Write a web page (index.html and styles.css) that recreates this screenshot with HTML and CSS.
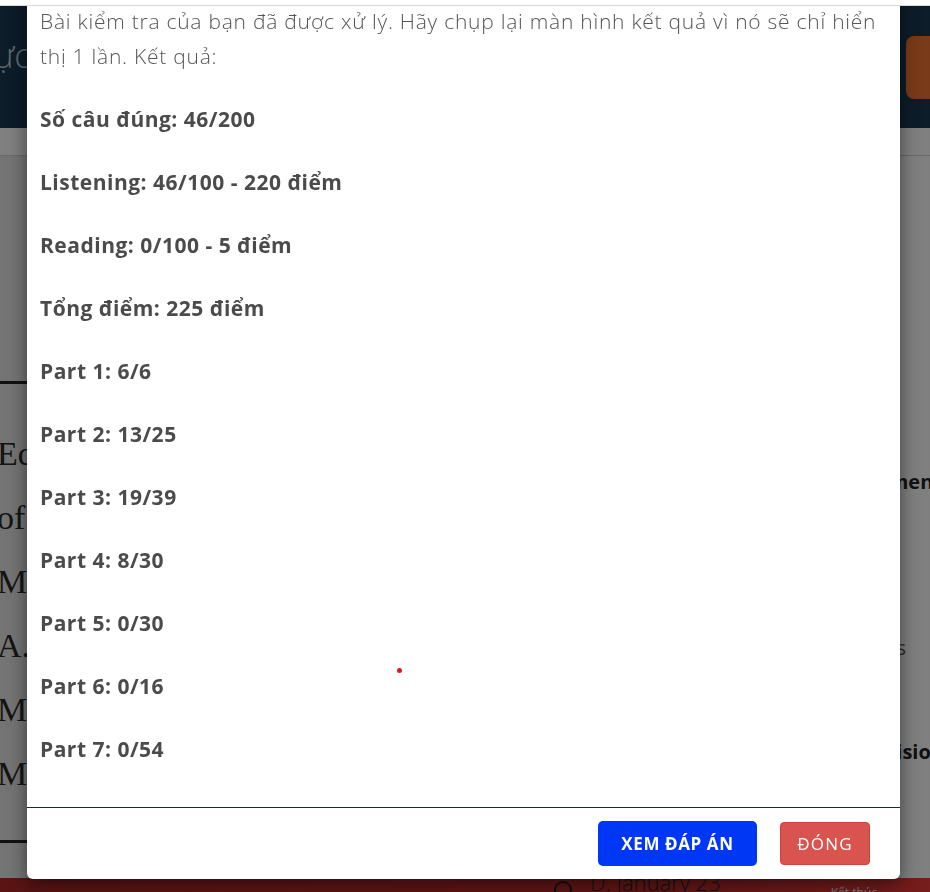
FILE: index.html
```html
<!DOCTYPE html>
<html lang="vi">
<head>
<meta charset="utf-8">
<title>Kết quả bài kiểm tra</title>
<link rel="stylesheet" href="styles.css">
</head>
<body>
<div class="page">
  <header class="site-header">
    <div class="brand">thực hành</div>
    <button class="cta">Nộp bài</button>
  </header>
  <nav class="subbar"></nav>
  <main class="main">
    <section class="doc">
      <div class="doc-rule"></div>
      <div class="doc-text">
        <p>Eq</p>
        <p>of</p>
        <p>M.-</p>
        <p>A.M</p>
        <p>M.-</p>
        <p>M.</p>
      </div>
      <div class="doc-rule"></div>
    </section>
    <section class="questions">
      <p class="q q-bold q1">Employee Agreement</p>
      <p class="q q-light q2">Answers</p>
      <p class="q q-bold q3">Decision</p>
    </section>
  </main>
  <footer class="site-footer">
    <span class="radio"></span><span class="opt">D. January 23</span>
    <span class="next">Kết thúc</span>
  </footer>
</div>

<div class="overlay"></div>

<div class="modal" role="dialog">
  <div class="modal-body">
    <p class="intro">Bài kiểm tra của bạn đã được xử lý. Hãy chụp lại màn hình kết quả vì nó sẽ chỉ hiển thị 1 lần. Kết quả:</p>
    <p class="row">Số câu đúng: 46/200</p>
    <p class="row">Listening: 46/100 - 220 điểm</p>
    <p class="row">Reading: 0/100 - 5 điểm</p>
    <p class="row">Tổng điểm: 225 điểm</p>
    <p class="row">Part 1: 6/6</p>
    <p class="row">Part 2: 13/25</p>
    <p class="row">Part 3: 19/39</p>
    <p class="row">Part 4: 8/30</p>
    <p class="row">Part 5: 0/30</p>
    <p class="row">Part 6: 0/16</p>
    <p class="row">Part 7: 0/54</p>
    <span class="dot"></span>
  </div>
  <div class="modal-footer">
    <button class="btn btn-primary">XEM ĐÁP ÁN</button>
    <button class="btn btn-danger">ĐÓNG</button>
  </div>
</div>

<div class="topstrip"></div>
</body>
</html>
```

FILE: styles.css
```css
* { box-sizing: border-box; }

html, body {
  margin: 0;
  padding: 0;
  height: 892px;
  overflow: hidden;
}

body {
  font-family: "Open Sans", "Liberation Sans", sans-serif;
  background: #fefefe;
}

.page {
  display: flex;
  flex-direction: column;
  height: 892px;
  padding-top: 6px;
}

.site-header {
  height: 122px;
  background: #183852;
  display: flex;
  align-items: flex-start;
  justify-content: space-between;
  overflow: hidden;
}

.brand {
  font-family: "Open Sans", sans-serif;
  font-weight: 300;
  font-size: 34px;
  color: #c0ccd8;
  margin-left: -38px;
  margin-top: 26px;
  white-space: nowrap;
}

.cta {
  margin-top: 30px;
  width: 110px;
  height: 63px;
  border: none;
  border-radius: 8px;
  background: #f07430;
  color: #fff;
  font-size: 16px;
  margin-right: -86px;
}

.subbar {
  height: 28px;
  background: #fff;
  border-bottom: 1px solid #d4d4d4;
}

.main {
  flex: 1;
  display: grid;
  grid-template-columns: 560px 1fr;
  background: #fff;
  overflow: hidden;
}

.doc {
  background: #e8e8e8;
  padding-top: 225px;
  display: flex;
  flex-direction: column;
}

.doc-rule {
  height: 3px;
  background: #222;
  width: 100%;
}

.doc-text {
  font-family: "Liberation Serif", serif;
  font-size: 34px;
  color: #2a2a2a;
  padding: 38px 0 34px 0;
}

.doc-text p {
  margin: 0;
  height: 64px;
  line-height: 64px;
  margin-left: -3px;
}

.questions {
  position: relative;
  padding-top: 312px;
  display: flex;
  flex-direction: column;
  align-items: flex-end;
  margin-right: -12px;
}

.q {
  margin: 0;
  white-space: nowrap;
  font-size: 20px;
  color: #222;
}

.q-bold { font-weight: 700; }
.q-light { font-weight: 400; color: #555; }
.q1 { height: 166px; }
.q2 { height: 104px; margin-right: 36px; }
.q3 { margin-right: -2px; }

.site-footer {
  height: 14px;
  background: linear-gradient(90deg, #b42828, #c42c2c 70%, #ec3a3a);
  display: flex;
  align-items: flex-start;
  padding-left: 554px;
  font-size: 22px;
  color: #222;
  position: relative;
}

.radio {
  width: 18px;
  height: 18px;
  border: 2px solid #222;
  border-radius: 50%;
  margin-top: 3px;
  margin-right: 18px;
}

.opt {
  line-height: 20px;
  margin-top: -6px;
  font-weight: 300;
}

.next {
  margin-left: 110px;
  font-size: 12px;
  color: #eee;
  margin-top: 6px;
}

.overlay {
  position: fixed;
  inset: 0;
  background: rgba(0, 0, 0, 0.5);
}

.modal {
  position: absolute;
  left: 27px;
  width: 873px;
  top: -20px;
  background: #fff;
  border-radius: 6px;
  box-shadow: 0 5px 18px rgba(0, 0, 0, 0.5);
}

.modal-body {
  position: relative;
  padding: 24px 14px 43px 13px;
}

.intro {
  margin: 0 0 30px 0;
  font-size: 21px;
  font-weight: 300;
  line-height: 35px;
  letter-spacing: 0.75px;
  color: #555;
}

.row {
  margin: 0 0 33px 0;
  font-size: 21px;
  font-weight: 700;
  line-height: 30px;
  letter-spacing: 0.5px;
  color: #4b4b4b;
}

.row:last-of-type { margin-bottom: 0; }

.dot {
  position: absolute;
  left: 370px;
  top: 688px;
  width: 5px;
  height: 5px;
  border-radius: 50%;
  background: #e01818;
}

.modal-footer {
  border-top: 1px solid #17293a;
  display: flex;
  justify-content: flex-end;
  align-items: center;
  gap: 23px;
  padding: 13px 30px 13px 16px;
}

.btn {
  border: none;
  color: #fff;
  font-family: "Open Sans", "Liberation Sans", sans-serif;
  font-size: 17px;
  cursor: pointer;
}

.btn-primary {
  width: 159px;
  height: 45px;
  background: #0037f4;
  border-radius: 5px;
  font-weight: 700;
  letter-spacing: 0.6px;
}

.btn-danger {
  width: 90px;
  height: 43px;
  background: #d9534f;
  border: 1px solid #d43f3a;
  border-radius: 4px;
  font-weight: 400;
  letter-spacing: 1.2px;
}

.topstrip {
  position: fixed;
  top: 0;
  left: 0;
  right: 0;
  height: 6px;
  background: #fff;
  border-bottom: 1px solid #d8d8d8;
}
```
